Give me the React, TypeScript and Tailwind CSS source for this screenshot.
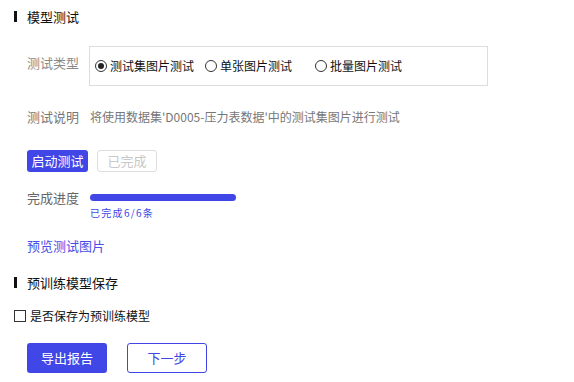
import React from "react";

const font = { fontFamily: '"Noto Sans CJK SC", "Noto Sans", sans-serif' };

function Radio({ checked, label, className }: { checked?: boolean; label: string; className?: string }) {
  return (
    <div className={"flex items-center " + (className ?? "")}>
      <span className="w-[12px] h-[12px] rounded-full border border-[#333] flex items-center justify-center">
        {checked && <span className="w-[6px] h-[6px] rounded-full bg-[#222]" />}
      </span>
      <span className="ml-[3px] text-[12px] leading-[18px] text-[#111]">{label}</span>
    </div>
  );
}

function Heading({ text }: { text: string }) {
  return (
    <div className="flex items-center h-[17px]">
      <span className="ml-[14px] w-[3px] h-[11px] bg-[#111]" />
      <span className="ml-[10px] text-[13px] leading-[17px] text-[#111]">{text}</span>
    </div>
  );
}

export default function App() {
  return (
    <div className="w-[574px] h-[382px] bg-white pt-[8px]" style={font}>
      <Heading text="模型测试" />

      <div className="flex mt-[21px]">
        <div className="ml-[27px] w-[62px] pt-[8px] text-[13px] leading-[18px] text-[#8a8a8a]">测试类型</div>
        <div className="w-[399px] h-[40px] border border-[#dcdcdc] flex items-center pl-[5px]">
          <Radio checked label="测试集图片测试" />
          <Radio label="单张图片测试" className="ml-[11px]" />
          <Radio label="批量图片测试" className="ml-[23px]" />
        </div>
      </div>

      <div className="flex mt-[22px] items-center h-[18px]">
        <div className="ml-[27px] w-[63px] text-[13px] leading-[18px] text-[#777]">测试说明</div>
        <div className="text-[12px] leading-[18px] text-[#777]">将使用数据集'D0005-压力表数据'中的测试集图片进行测试</div>
      </div>

      <div className="flex mt-[24px] ml-[27px]">
        <button className="w-[61px] h-[22px] rounded-[3px] bg-[#4146e6] text-white text-[13px] leading-[22px]">启动测试</button>
        <button className="ml-[9px] w-[60px] h-[22px] rounded-[3px] border border-[#dedede] bg-white text-[#c8c8c8] text-[13px] leading-[20px]">已完成</button>
      </div>

      <div className="flex mt-[17px]">
        <div className="ml-[27px] w-[63px] text-[13px] leading-[18px] text-[#666]">完成进度</div>
        <div className="flex flex-col">
          <div className="mt-[5px] w-[146px] h-[7px] rounded-full bg-[#4146e6]" />
          <div className="mt-[6px] text-[10px] leading-[12px] tracking-[1.3px] text-[#4146e6]">已完成6/6条</div>
        </div>
      </div>

      <div className="mt-[18px] ml-[27px] text-[13px] leading-[18px] text-[#4a4de6]">预览测试图片</div>

      <div className="mt-[19px]">
        <Heading text="预训练模型保存" />
      </div>

      <div className="flex items-center mt-[16px] h-[18px]">
        <span className="ml-[14px] w-[12px] h-[12px] border border-[#333] bg-white" />
        <span className="ml-[4px] text-[12px] leading-[18px] text-[#111]">是否保存为预训练模型</span>
      </div>

      <div className="flex mt-[18px] ml-[27px]">
        <button className="w-[80px] h-[30px] rounded-[3px] bg-[#4146e6] text-white text-[13px] leading-[30px]">导出报告</button>
        <button className="ml-[20px] w-[80px] h-[30px] rounded-[3px] border border-[#4146e6] bg-white text-[#4146e6] text-[13px] leading-[28px]">下一步</button>
      </div>
    </div>
  );
}
